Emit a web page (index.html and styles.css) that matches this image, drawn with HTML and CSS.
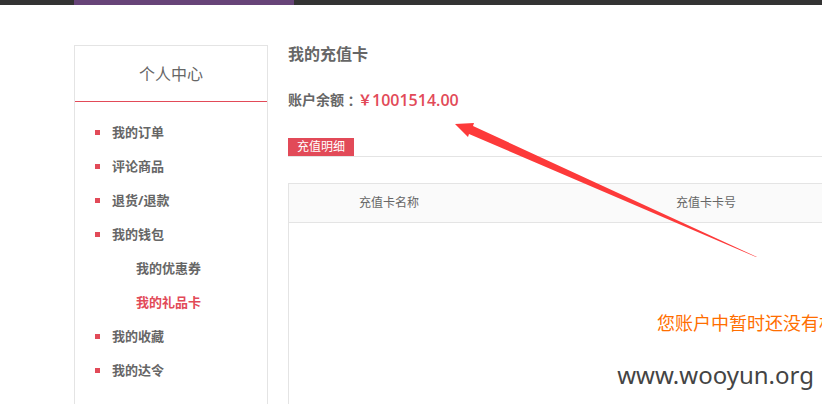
FILE: index.html
```html
<!DOCTYPE html>
<html lang="zh-CN">
<head>
<meta charset="utf-8">
<title>我的充值卡</title>
<link rel="stylesheet" href="styles.css">
</head>
<body>
<header class="topbar"><div class="topbar-active"></div></header>
<div class="page">
  <aside class="sidebar">
    <h2 class="sidebar-title">个人中心</h2>
    <ul class="menu">
      <li><a href="#">我的订单</a></li>
      <li><a href="#">评论商品</a></li>
      <li><a href="#">退货/退款</a></li>
      <li><a href="#">我的钱包</a></li>
      <li class="sub"><a href="#">我的优惠券</a></li>
      <li class="sub current"><a href="#">我的礼品卡</a></li>
      <li><a href="#">我的收藏</a></li>
      <li><a href="#">我的达令</a></li>
    </ul>
  </aside>
  <main class="content">
    <h1 class="title">我的充值卡</h1>
    <p class="balance">账户余额<span class="colon">：</span><span class="yen">￥</span><strong class="amount">1001514.00</strong></p>
    <div class="tabs"><a class="tab" href="#">充值明细</a></div>
    <table class="records">
      <thead>
        <tr><th class="col-name">充值卡名称</th><th class="col-number">充值卡卡号</th><th></th></tr>
      </thead>
      <tbody>
        <tr><td class="empty" colspan="3">您账户中暂时还没有相</td></tr>
      </tbody>
    </table>
  </main>
</div>
<svg class="arrow" width="304" height="136" viewBox="0 0 304 136" aria-hidden="true">
  <path d="M1 2 L20 1 L19 4 L303 135 L302 135 L15 12 L14 15 Z" fill="#fd3a3a"/>
</svg>
<div class="watermark">www.wooyun.org</div>
</body>
</html>
```
FILE: styles.css
```css
* {
  box-sizing: border-box;
}

body {
  position: relative;
  display: flex;
  flex-direction: column;
  height: 100vh;
  margin: 0;
  overflow: hidden;
  background: #fff;
  color: #666;
  font: 13px/20px "Noto Sans", "Noto Sans CJK SC", sans-serif;
}

a {
  color: inherit;
  text-decoration: none;
}

.topbar {
  flex: none;
  height: 5px;
  padding-left: 74px;
  background: #333;
}

.topbar-active {
  width: 220px;
  height: 5px;
  background: #674478;
}

.page {
  display: flex;
  flex: 1;
  gap: 20px;
  min-height: 0;
  padding: 40px 0 0 74px;
}

.sidebar {
  flex: none;
  width: 194px;
  border: 1px solid #e4e4e4;
  border-bottom: 0;
}

.sidebar-title {
  margin: 0;
  padding: 16px 0 15px;
  border-bottom: 1px solid #e24a58;
  font-size: 16px;
  font-weight: 400;
  line-height: 24px;
  text-align: center;
}

.menu {
  margin: 0;
  padding: 13px 0 0 20px;
  list-style: none;
  font-weight: 700;
  line-height: 34px;
}

.menu li {
  display: flex;
  align-items: center;
  gap: 12px;
}

.menu li::before {
  width: 5px;
  height: 5px;
  background: #e24a58;
  content: "";
}

.menu .sub {
  padding-left: 41px;
}

.menu .sub::before {
  content: none;
}

.menu .current {
  color: #e24a58;
}

.content {
  display: flex;
  flex: 1;
  flex-direction: column;
  min-width: 0;
}

.title {
  margin: 0;
  font-size: 16px;
  line-height: 18px;
}

.balance {
  display: flex;
  align-items: center;
  margin: 27px 0 28px;
  font-size: 14px;
  font-weight: 700;
}

.colon {
  font-family: "Noto Sans CJK TC", sans-serif;
}

.yen,
.amount {
  color: #e24a58;
}

.amount {
  font-family: "Open Sans", sans-serif;
  font-size: 16px;
  font-weight: 600;
}

.tabs {
  display: flex;
  border-bottom: 1px solid #e4e4e4;
}

.tab {
  padding: 0 9px;
  background: #e24a58;
  color: #fff;
  font-size: 12px;
  line-height: 18px;
}

.records {
  flex: 1;
  width: 980px;
  margin-top: 26px;
  border: 1px solid #e4e4e4;
  border-bottom: 0;
  border-spacing: 0;
  table-layout: fixed;
}

.records th {
  height: 39px;
  padding: 0;
  border-bottom: 1px solid #e4e4e4;
  background: #fafafa;
  font-size: 12px;
  font-weight: 400;
}

.col-name {
  width: 200px;
}

.col-number {
  width: 434px;
}

.empty {
  padding: 86px 0 0 368px;
  color: #ff6e00;
  font-size: 18px;
  line-height: 28px;
  vertical-align: top;
}

.arrow {
  position: absolute;
  top: 122px;
  left: 454px;
}

.watermark {
  position: absolute;
  right: 8px;
  bottom: 12px;
  color: #444;
  font: 24px/34px "Noto Sans", sans-serif;
}
```
